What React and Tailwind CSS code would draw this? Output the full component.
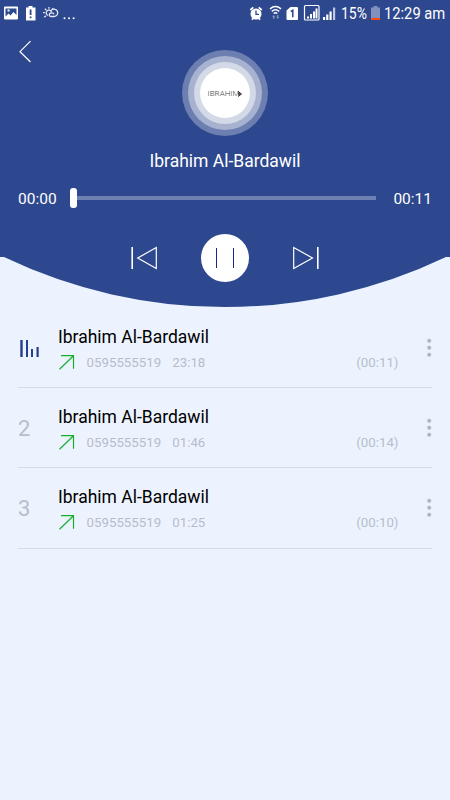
const calls = [
  { id: 1, name: "Ibrahim Al-Bardawil", phone: "0595555519", time: "23:18", length: "(00:11)", playing: true },
  { id: 2, name: "Ibrahim Al-Bardawil", phone: "0595555519", time: "01:46", length: "(00:14)" },
  { id: 3, name: "Ibrahim Al-Bardawil", phone: "0595555519", time: "01:25", length: "(00:10)" },
];

const StatusBar = () => {
  return (
    <div className="flex h-7 items-center justify-between pl-1 pr-[5px] text-white">
      {/* Left - Notifications */}
      <svg width="76" height="28" viewBox="0 0 76 28">
        <path
          fillRule="evenodd"
          fill="#fff"
          d="M1 6.500h12q1 0 1 1v11q0 1-1 1H1q-1 0-1-1v-11q0-1 1-1zM1.500 8.500v8l3-3 2 2 3-3.500 3 3V8.500zM3.500 9.500h2v2h-2z"
        />
        <path fillRule="evenodd" fill="#fff" d="M24.500 6h4v1.500h3V20.500h-9.500V7.500h2.500zM25.700 9.500v5.500h1.800V9.500zM25.700 16.500v1.800h1.800v-1.800z" />
        <g fill="none" stroke="#e6eaf4" strokeWidth="1.300">
          <path d="M44 15.500a2.800 2.800 0 1 1 3.600-3.600M39 12.700h1.800M40.800 8.700l1.500 1.400M45 7v1.800M40.300 17.200l1.600-1.400M49.300 8.200l-1.300 1.400" />
          <path d="M46.500 16.500h3.500a3.700 3.700 0 1 0-3-5.800M46.500 16.500a1.800 1.800 0 0 1 .5-3.500q2.500-.3 3 1.200" />
        </g>
        <g fill="#fff">
          <circle cx="60.500" cy="18.300" r="1" />
          <circle cx="65" cy="18.300" r="1" />
          <circle cx="69.600" cy="18.300" r="1" />
        </g>
      </svg>

      {/* Right - Signal, battery and clock */}
      <div className="flex items-center">
        <svg width="90" height="28" viewBox="0 0 90 28" className="mr-[3px]">
          <circle cx="8" cy="14" r="5.500" fill="#fff" />
          <path d="M2.300 10l3-2.700M13.700 10l-3-2.700M3.800 19.700l1.700-1.500M12.200 19.700l-1.700-1.500" stroke="#fff" strokeWidth="1.800" />
          <path d="M8 10.500v3.800h3" fill="none" stroke="#2d488e" strokeWidth="1.300" />
          <g fill="none" stroke="#fff" strokeWidth="1.500">
            <path d="M22 8.800q5.500-4.500 11 0M23.800 11.300q3.700-3 7.400 0M25.700 13.500q1.800-1.400 3.600 0" />
          </g>
          <path d="M24 17l1.700-2 1.700 2h-1v2H25v-2zM28 17h1v-2h1.400v2h1l-1.700 2z" fill="#8090bd" />
          <path d="M42.500 7H49q1 0 1 1v11q0 1-1 1h-9.500q-1 0-1-1V10.500z" fill="#fff" />
          <path d="M42.800 11.500l2-1.200v7" fill="none" stroke="#2d488e" strokeWidth="1.500" />
          <rect x="56.500" y="5.500" width="14.500" height="14.500" rx="1" fill="none" stroke="#fff" strokeWidth="1.200" />
          <path d="M59 16.500h2v2h-2zM62 14h2v4.500h-2zM65 11.500h2v7h-2zM67.500 8.500h2v10h-2z" fill="#fff" />
          <path d="M75 17h2.200v3H75zM78.200 14.500h2.200V20h-2.200zM81.500 11.500h2.200V20h-2.200z" fill="#fff" />
          <path d="M85 7.500h2.200V20H85z" fill="#c0c8de" />
        </svg>
        <span className="w-[27px] origin-left scale-x-[0.87] whitespace-nowrap text-[16px] leading-7">15%</span>
        <svg width="9" height="28" viewBox="0 0 9 28" className="ml-[3px]">
          <path d="M2.500 6h4v1.500H9V20H0V7.500h2.500z" fill="#8191bd" />
          <path d="M0 18h9v2H0z" fill="#ff4d12" />
        </svg>
        <span className="ml-1 w-[61px] origin-left scale-x-[0.92] whitespace-nowrap text-[16px] leading-7">12:29 am</span>
      </div>
    </div>
  );
};

const Player = () => {
  return (
    <header className="relative isolate h-[307px] text-white">
      <svg className="absolute inset-0 -z-10" width="450" height="308" viewBox="0 0 450 308">
        <path d="M0 0H450V257H446A513 513 0 0 1 4 257H0Z" fill="#2d488e" />
      </svg>

      <StatusBar />

      <div className="grid h-[109px] grid-cols-[60px_1fr_60px]">
        <svg width="60" height="50" viewBox="0 0 60 50" fill="none">
          <path d="M30.500 13.200L20 23.700l10.500 10.300" stroke="#fff" strokeWidth="1.200" />
        </svg>
        <div className="mt-[22px] flex size-[86px] items-center justify-center justify-self-center rounded-full bg-white/30">
          <div className="flex size-[74px] items-center justify-center rounded-full bg-white/40">
            <div className="flex size-[62px] items-center justify-center rounded-full bg-white/50">
              <div className="flex size-[50px] items-center justify-center rounded-full bg-white">
                <span className="pt-0.5 text-[8px] font-light text-[#444] antialiased">IBRAHIM</span>
                <svg width="5" height="6" viewBox="0 0 5 6" className="-ml-0.5 mt-0.5">
                  <path d="M1 .5L4.500 3 1 5.500" fill="none" stroke="#222" />
                  <circle cx="2" cy="3" r="1" fill="#222" />
                </svg>
              </div>
            </div>
          </div>
        </div>
      </div>

      <h1 className="mt-3 text-center text-[17.500px] leading-6">Ibrahim Al-Bardawil</h1>

      <div className="mt-[15px] flex h-5 items-center px-[18px] text-[15.500px] leading-5">
        <span className="w-[52px] pt-px">00:00</span>
        <div className="flex flex-1 items-center">
          <div className="h-5 w-[7px] rounded-[3px] bg-white" />
          <div className="h-1 flex-1 bg-[#6e81b2]" />
        </div>
        <span className="w-[56px] pt-px text-right">00:11</span>
      </div>

      {/* Controls */}
      <div className="mt-[26px] flex items-center justify-center gap-[43px]">
        <svg width="28" height="24" viewBox="0 0 28 24" fill="none" stroke="#fff">
          <path d="M2.200 1v22" strokeWidth="1.600" />
          <path d="M26.300 1.500v21L7.700 12z" strokeWidth="1.200" />
        </svg>
        <div className="flex size-12 items-center justify-center gap-4 rounded-full bg-white">
          <div className="h-5 w-px bg-[#142a86]" />
          <div className="h-5 w-px bg-[#142a86]" />
        </div>
        <svg width="28" height="24" viewBox="0 0 28 24" fill="none" stroke="#fff">
          <path d="M25.800 1v22" strokeWidth="1.600" />
          <path d="M1.700 1.500v21L20.500 12z" strokeWidth="1.200" />
        </svg>
      </div>
    </header>
  );
};

const CallRow = ({ call }) => {
  return (
    <li className="flex h-[80.400px] border-b border-[#d5dbe8] text-[#b7bdcb]">
      <div className="w-10 pt-[27px]">
        {call.playing ? (
          <svg width="24" height="28" viewBox="0 0 24 28">
            <path d="M2.300 5h2.400v17H2.300zM8 5h2v17H8zM13 14h2v8h-2zM18.500 12h2.200v10h-2.200z" fill="#21408e" />
          </svg>
        ) : (
          <span className="text-[22px] leading-7">{call.id}</span>
        )}
      </div>
      <div className="flex-1 pt-[17px]">
        <p className="text-[17.500px] leading-6 text-black">{call.name}</p>
        <div className="mt-1 flex items-center text-[13.300px] leading-5">
          <svg width="17" height="16" viewBox="0 0 17 16" fill="none" stroke="#16ae2c" strokeWidth="1.200">
            <path d="M3 .7h12.500v13M15.500 .7L1.500 14.300" />
          </svg>
          <span className="ml-[11.500px]">{call.phone}</span>
          <span className="ml-[11px]">{call.time}</span>
          <span className="ml-auto pr-[13.500px]">{call.length}</span>
        </div>
      </div>
      <svg width="20" height="80" viewBox="0 0 20 80" fill="#afb5c3">
        <circle cx="17.200" cy="32.700" r="2" />
        <circle cx="17.200" cy="39.700" r="2" />
        <circle cx="17.200" cy="46.700" r="2" />
      </svg>
    </li>
  );
};

const App = () => {
  return (
    <div className="h-[800px] w-[450px] overflow-hidden bg-[#ecf3ff] font-[Roboto,sans-serif]">
      <Player />
      <ul className="px-[18px] pt-[0.500px]">
        {calls.map((call) => (
          <CallRow key={call.id} call={call} />
        ))}
      </ul>
    </div>
  );
};

export default App;
